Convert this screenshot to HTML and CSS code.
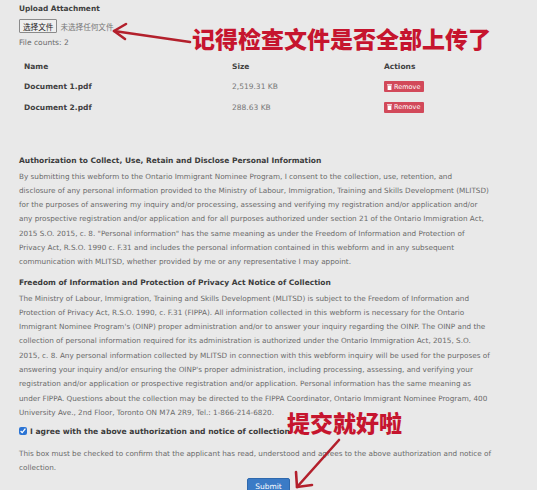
FILE: index.html
```html
<!DOCTYPE html>
<html lang="en">
<head>
<meta charset="utf-8">
<title>Upload Attachment</title>
<link rel="stylesheet" href="styles.css">
</head>
<body>
<div class="page">
  <section class="upload">
    <div class="field-label">Upload Attachment</div>
    <div class="file-input"><span class="file-btn">选择文件</span><span class="file-none">未选择任何文件</span></div>
    <div class="count">File counts: 2</div>
    <table class="files">
      <colgroup><col class="c-name"><col class="c-size"><col class="c-act"></colgroup>
      <thead>
        <tr><th>Name</th><th>Size</th><th>Actions</th></tr>
      </thead>
      <tbody>
        <tr><td class="fname">Document 1.pdf</td><td class="fsize">2,519.31 KB</td><td><span class="remove"><svg class="trash" viewBox="0 0 5 6" width="5" height="6"><rect x="0" y="0.3" width="5" height="1" fill="#fff"/><rect x="0.6" y="1.6" width="3.8" height="4.4" fill="#fff"/></svg>Remove</span></td></tr>
        <tr><td class="fname">Document 2.pdf</td><td class="fsize">288.63 KB</td><td><span class="remove"><svg class="trash" viewBox="0 0 5 6" width="5" height="6"><rect x="0" y="0.3" width="5" height="1" fill="#fff"/><rect x="0.6" y="1.6" width="3.8" height="4.4" fill="#fff"/></svg>Remove</span></td></tr>
      </tbody>
    </table>
  </section>

  <section class="notice first">
    <h3>Authorization to Collect, Use, Retain and Disclose Personal Information</h3>
    <p>By submitting this webform to the Ontario Immigrant Nominee Program, I consent to the collection, use, retention, and<br>disclosure of any personal information provided to the Ministry of Labour, Immigration, Training and Skills Development (MLITSD)<br>for the purposes of answering my inquiry and/or processing, assessing and verifying my registration and/or application and/or<br>any prospective registration and/or application and for all purposes authorized under section 21 of the Ontario Immigration Act,<br>2015 S.O. 2015, c. 8. "Personal information" has the same meaning as under the Freedom of Information and Protection of<br>Privacy Act, R.S.O. 1990 c. F.31 and includes the personal information contained in this webform and in any subsequent<br>communication with MLITSD, whether provided by me or any representative I may appoint.</p>
  </section>

  <section class="notice">
    <h3>Freedom of Information and Protection of Privacy Act Notice of Collection</h3>
    <p>The Ministry of Labour, Immigration, Training and Skills Development (MLITSD) is subject to the Freedom of Information and<br>Protection of Privacy Act, R.S.O. 1990, c. F.31 (FIPPA). All information collected in this webform is necessary for the Ontario<br>Immigrant Nominee Program's (OINP) proper administration and/or to answer your inquiry regarding the OINP. The OINP and the<br>collection of personal information required for its administration is authorized under the Ontario Immigration Act, 2015, S.O.<br>2015, c. 8. Any personal information collected by MLITSD in connection with this webform inquiry will be used for the purposes of<br>answering your inquiry and/or ensuring the OINP's proper administration, including processing, assessing, and verifying your<br>registration and/or application or prospective registration and/or application. Personal information has the same meaning as<br>under FIPPA. Questions about the collection may be directed to the FIPPA Coordinator, Ontario Immigrant Nominee Program, 400<br>University Ave., 2nd Floor, Toronto ON M7A 2R9, Tel.: 1-866-214-6820.</p>
  </section>

  <label class="agree"><input type="checkbox" checked><span>I agree with the above authorization and notice of collection</span></label>
  <p class="hint">This box must be checked to confirm that the applicant has read, understood and agrees to the above authorization and notice of<br>collection.</p>

  <div class="actions"><button class="submit" type="button">Submit</button></div>
</div>

<div class="annot annot-1">记得检查文件是否全部上传了</div>
<svg class="arrow arrow-1" width="90" height="30" viewBox="0 0 90 30">
  <path d="M80 22 L4 11" stroke="#b3202c" stroke-width="2.6" fill="none" stroke-linecap="round"/>
  <path d="M16 4 L4 11 L15 19" stroke="#b3202c" stroke-width="2.6" fill="none" stroke-linecap="round" stroke-linejoin="round"/>
</svg>
<div class="annot annot-2">提交就好啦</div>
<svg class="arrow arrow-2" width="60" height="60" viewBox="0 0 60 60">
  <path d="M52 6 L10 53" stroke="#b3202c" stroke-width="2.6" fill="none" stroke-linecap="round"/>
  <path d="M9 38 L10 53 L25 51" stroke="#b3202c" stroke-width="2.6" fill="none" stroke-linecap="round" stroke-linejoin="round"/>
</svg>
</body>
</html>
```

FILE: styles.css
```css
html, body {
  margin: 0;
  padding: 0;
  background: #e9e9e9;
}

body {
  font-family: "DejaVu Sans", Verdana, sans-serif;
  font-size: 7.25px;
  color: #6a6a6a;
  width: 537px;
  height: 490px;
  overflow: hidden;
  position: relative;
}

.page {
  padding: 2px 19px 0 19px;
  width: 499px;
}

.field-label {
  font-weight: bold;
  font-size: 7.4px;
  color: #404040;
  line-height: 14px;
}

.file-input {
  display: flex;
  align-items: center;
  margin-top: 3px;
  height: 14px;
  font-family: "Noto Sans CJK SC", sans-serif;
  font-size: 7.6px;
}

.file-btn {
  box-sizing: border-box;
  height: 14px;
  padding: 0 3px;
  border: 1px solid #8a8a8a;
  background: #efefef;
  color: #222;
  border-radius: 1px;
  display: flex;
  align-items: center;
}

.file-none {
  margin-left: 3px;
  color: #777;
}

.count {
  line-height: 14px;
  margin-top: 3px;
  font-size: 7.5px;
}

.files {
  border-collapse: collapse;
  margin-top: 6px;
  width: 499px;
}

.c-name { width: 208px; }
.c-size { width: 152px; }
.c-act { width: 139px; }

.files th,
.files td {
  text-align: left;
  padding: 0 0 0 5px;
  height: 20.5px;
  vertical-align: middle;
  font-size: 7.5px;
}

.files th {
  font-weight: bold;
  color: #404040;
}

.files td.fname {
  font-weight: bold;
  color: #404040;
}

.files td.fsize {
  color: #777;
}

.remove {
  display: inline-flex;
  align-items: center;
  gap: 2px;
  background: #d2495a;
  color: #fff;
  font-size: 6.5px;
  height: 11px;
  width: 40px;
  box-sizing: border-box;
  padding: 0 3px;
  border-radius: 1px;
  vertical-align: middle;
}

.trash {
  display: block;
}

.notice {
  margin-top: 6px;
}

.notice.first {
  margin-top: 36px;
}

.notice h3 {
  margin: 0;
  font-size: 7.5px;
  line-height: 14px;
  font-weight: bold;
  color: #3c3c3c;
}

.notice p {
  margin: 2px 0 0 0;
  line-height: 14.3px;
  white-space: nowrap;
}

.agree {
  display: flex;
  align-items: center;
  margin-top: 4px;
  height: 14px;
  font-weight: bold;
  font-size: 7.6px;
  color: #3c3c3c;
}

.agree input {
  margin: 0 3px 0 0;
  width: 8px;
  height: 8px;
  accent-color: #2b74d4;
}

.hint {
  margin: 9px 0 0 0;
  line-height: 14px;
  white-space: nowrap;
}

.actions {
  display: flex;
  justify-content: center;
  margin-top: 3px;
}

.submit {
  font-family: "DejaVu Sans", Verdana, sans-serif;
  font-size: 7.5px;
  color: #fff;
  background: #3b7bc6;
  border: 1px solid #2f69ad;
  border-radius: 2px;
  width: 43px;
  height: 18px;
  padding: 0;
  line-height: 12px;
  display: flex;
  justify-content: center;
  padding-top: 2px;
}

.annot {
  position: absolute;
  font-family: "Noto Sans CJK SC", sans-serif;
  font-weight: 900;
  font-size: 23px;
  line-height: 26px;
  color: #c6152e;
  white-space: nowrap;
}

.annot-1 {
  left: 192px;
  top: 25px;
}

.annot-2 {
  left: 287px;
  top: 409px;
}

.arrow {
  position: absolute;
}

.arrow-1 {
  left: 110px;
  top: 20px;
}

.arrow-2 {
  left: 287px;
  top: 434px;
}
```
